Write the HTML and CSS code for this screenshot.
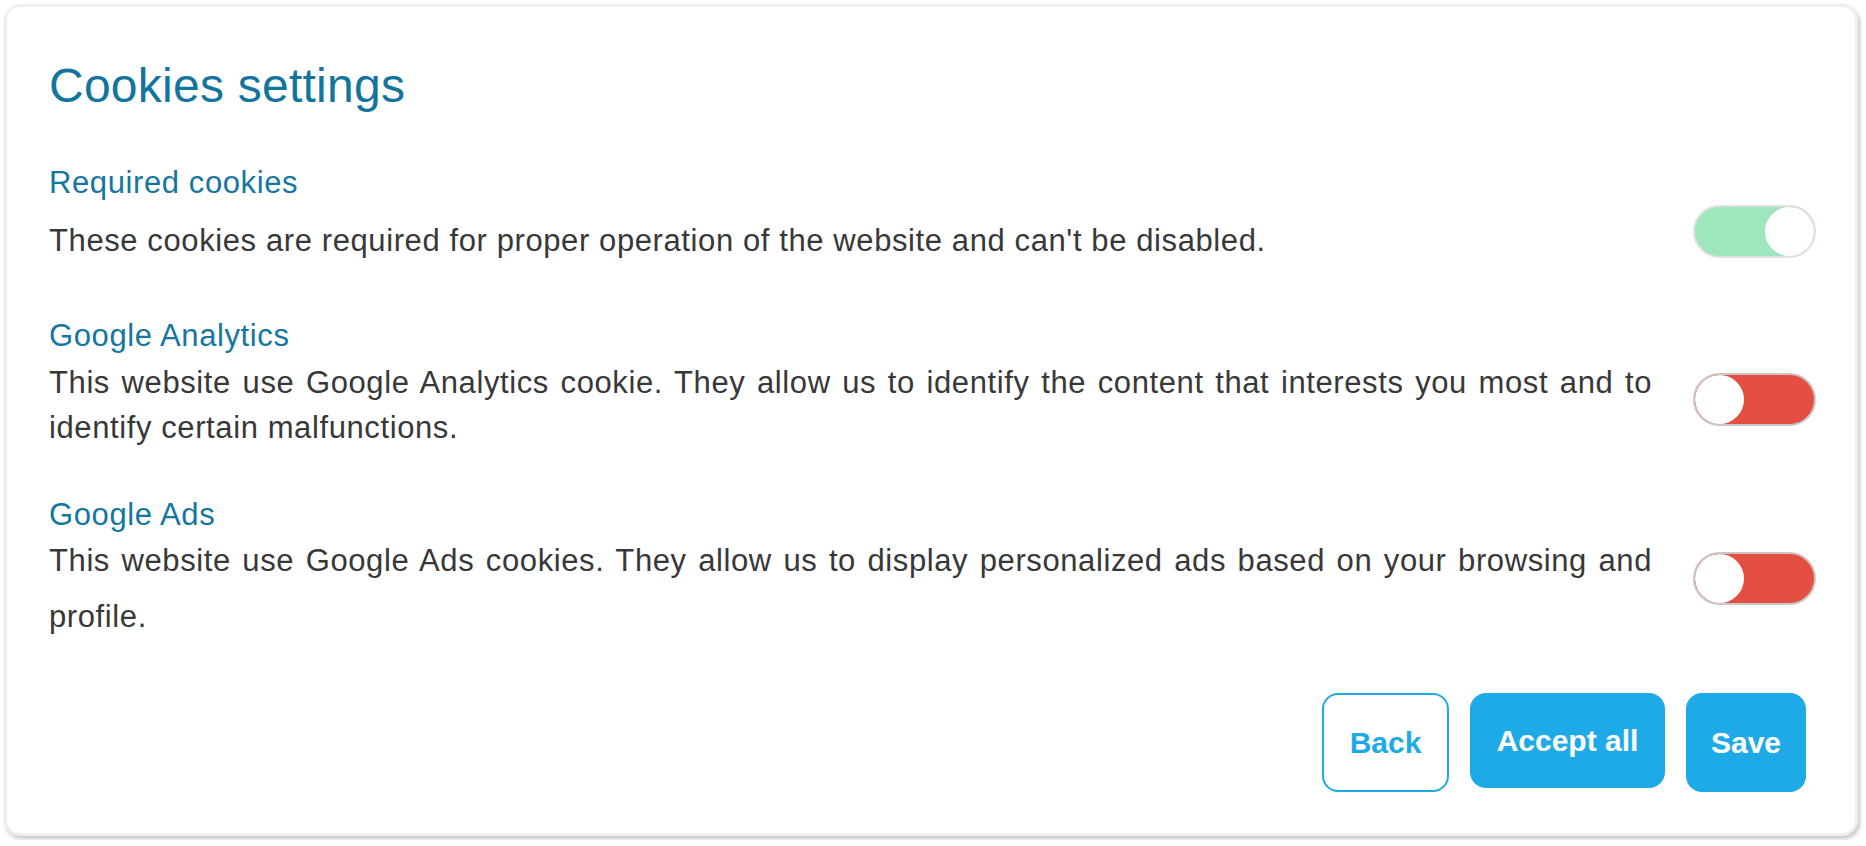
FILE: index.html
```html
<!DOCTYPE html>
<html lang="en">
<head>
<meta charset="utf-8">
<title>Cookies settings</title>
<link rel="stylesheet" href="styles.css">
</head>
<body>
<div class="card">
  <h1 class="title">Cookies settings</h1>

  <div class="section section--first">
    <div class="text">
      <h2 class="heading">Required cookies</h2>
      <p class="desc desc--single">These cookies are required for proper operation of the website and can't be disabled.</p>
    </div>
    <div class="toggle toggle--on"><span class="knob"></span></div>
  </div>

  <div class="section section--mid">
    <div class="text">
      <h2 class="heading">Google Analytics</h2>
      <p class="desc">This website use Google Analytics cookie. They allow us to identify the content that interests you most and to identify certain malfunctions.</p>
    </div>
    <div class="toggle toggle--off"><span class="knob"></span></div>
  </div>

  <div class="section section--last">
    <div class="text">
      <h2 class="heading">Google Ads</h2>
      <p class="desc desc--loose">This website use Google Ads cookies. They allow us to display personalized ads based on your browsing and profile.</p>
    </div>
    <div class="toggle toggle--off"><span class="knob"></span></div>
  </div>

  <div class="actions">
    <button class="btn btn--outline btn--back">Back</button>
    <button class="btn btn--solid btn--accept">Accept all</button>
    <button class="btn btn--solid btn--save">Save</button>
  </div>
</div>
</body>
</html>
```

FILE: styles.css
```css
* { box-sizing: border-box; }

html, body {
  margin: 0;
  padding: 0;
  background: #ffffff;
}

body {
  padding: 4px;
  font-family: "Liberation Sans", Arial, Helvetica, sans-serif;
}

.card {
  width: 1854px;
  height: 832px;
  border: 3px solid #eeeff0;
  border-radius: 16px;
  box-shadow: 2px 3px 4px rgba(0, 0, 0, 0.22);
  background: #ffffff;
  padding: 51px 39px 0 42px;
  display: flex;
  flex-direction: column;
}

.title {
  margin: 0 0 46px 0;
  font-size: 48px;
  line-height: 56px;
  font-weight: normal;
  color: #13749e;
  letter-spacing: 0.25px;
}

.section {
  display: flex;
  align-items: center;
  gap: 41px;
}

.section--mid { margin-top: 50px; }
.section--last { margin-top: 42px; }

.text {
  flex: 1;
  min-width: 0;
}

.heading {
  margin: 0;
  font-size: 31px;
  line-height: 45px;
  font-weight: normal;
  color: #15769f;
  letter-spacing: 0.6px;
}

.desc {
  margin: 2px 0 0 0;
  font-size: 31px;
  line-height: 45px;
  color: #383838;
  letter-spacing: 0.6px;
  text-align: justify;
}

.desc--single { margin-top: 13px; }

.desc--loose {
  line-height: 56px;
  margin-top: -4px;
}

.toggle {
  flex: none;
  width: 123px;
  height: 53px;
  border-radius: 27px;
  border: 2px solid #dcdcdc;
  margin-top: 36px;
  display: flex;
  align-items: center;
  padding: 0;
  overflow: hidden;
}

.section--first .toggle { margin-top: 39px; }
.section--last .toggle { margin-top: 19px; }

.toggle--on {
  background: #9ee6bb;
  justify-content: flex-end;
  border-color: #e0e0e0;
}

.toggle--off {
  background: #e54e42;
  justify-content: flex-start;
  border-color: #cbc6c6;
}

.knob {
  width: 49px;
  height: 49px;
  border-radius: 50%;
  background: #ffffff;
}

.actions {
  margin-top: 48px;
  margin-right: 10px;
  display: flex;
  justify-content: flex-end;
  align-items: flex-start;
  gap: 21px;
}

.btn {
  font-family: "Liberation Sans", Arial, Helvetica, sans-serif;
  font-weight: bold;
  font-size: 30px;
  height: 99px;
  padding: 0;
  border-radius: 16px;
  border: 2px solid #1eaae7;
  cursor: pointer;
  display: flex;
  align-items: center;
  justify-content: center;
}

.btn--outline {
  background: #ffffff;
  color: #1eaae7;
}

.btn--solid {
  background: #1eaae7;
  color: #ffffff;
}

.btn--back { width: 127px; }
.btn--accept { width: 195px; height: 95px; }
.btn--save { width: 120px; }
```
